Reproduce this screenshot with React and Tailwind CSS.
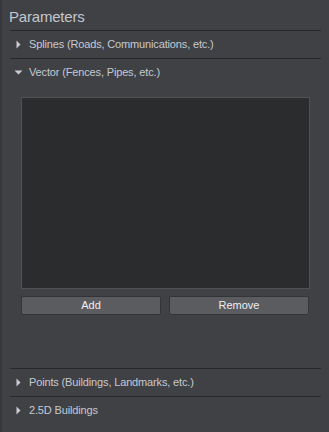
import { useState } from 'react'

const font = { fontFamily: '"Liberation Sans", Arial, sans-serif' }

function Arrow({ open }) {
  return open ? (
    <svg width="9" height="9" viewBox="0 0 9 9" className="shrink-0">
      <polygon points="0.5,2.5 8.5,2.5 4.5,6.5" fill="#c9ccd2" />
    </svg>
  ) : (
    <svg width="9" height="9" viewBox="0 0 9 9" className="shrink-0">
      <polygon points="2.5,0.5 6.5,4.5 2.5,8.5" fill="#c9ccd2" />
    </svg>
  )
}

function Section({ label, open, onToggle, children }) {
  return (
    <div className="border-t border-[#27282b]">
      <button
        onClick={onToggle}
        className="flex items-center gap-[6px] w-full h-[27px] pl-[4px] text-[11px] tracking-[-0.15px] text-[#c5c9d1] text-left"
      >
        <Arrow open={open} />
        <span>{label}</span>
      </button>
      {open && children}
    </div>
  )
}

export default function App() {
  const [open, setOpen] = useState({ splines: false, vector: true, points: false, buildings: false })
  const toggle = (k) => setOpen({ ...open, [k]: !open[k] })

  return (
    <div className="w-[329px] h-[432px] bg-[#404145] border-l-2 border-[#37383c] overflow-hidden" style={font}>
      <div className="pl-[7px] pt-[6px] h-[30px] text-[15px] tracking-[-0.2px] text-[#c3c7cf]">Parameters</div>
      <div className="mx-[8px]">
        <Section label="Splines (Roads, Communications, etc.)" open={open.splines} onToggle={() => toggle('splines')} />
        <Section label="Vector (Fences, Pipes, etc.)" open={open.vector} onToggle={() => toggle('vector')}>
          <div className="px-[11px] pt-[11px] h-[282px]">
            <div className="h-[192px] bg-[#2b2c2e] border border-[#505155]" />
            <div className="flex gap-[8px] mt-[7px] mr-[1px]">
              <button className="flex-1 h-[19px] bg-[#5b5c60] border border-[#333437] rounded-[2px] text-[11px] text-[#eceef2]">
                Add
              </button>
              <button className="flex-1 h-[19px] bg-[#5b5c60] border border-[#333437] rounded-[2px] text-[11px] text-[#eceef2]">
                Remove
              </button>
            </div>
          </div>
        </Section>
        <Section label="Points (Buildings, Landmarks, etc.)" open={open.points} onToggle={() => toggle('points')} />
        <Section label="2.5D Buildings" open={open.buildings} onToggle={() => toggle('buildings')} />
      </div>
    </div>
  )
}
